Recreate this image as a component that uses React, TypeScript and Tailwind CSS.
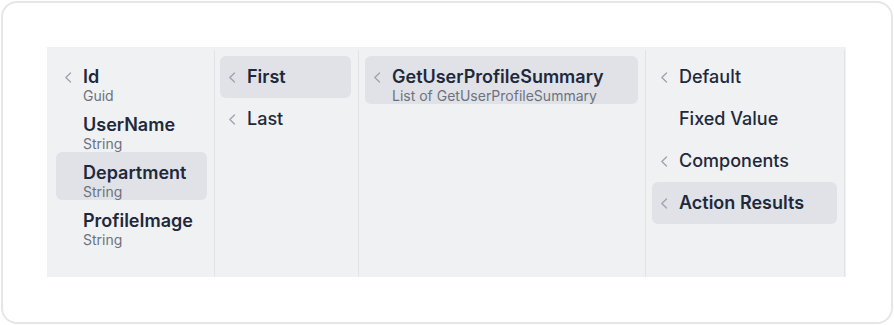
import React from 'react';

type Item = { label: string; sub?: string; chevron?: boolean; active?: boolean };

const fields: Item[] = [
  { label: 'Id', sub: 'Guid', chevron: true },
  { label: 'UserName', sub: 'String' },
  { label: 'Department', sub: 'String', active: true },
  { label: 'ProfileImage', sub: 'String' },
];

const positions: Item[] = [
  { label: 'First', chevron: true, active: true },
  { label: 'Last', chevron: true },
];

const results: Item[] = [
  { label: 'GetUserProfileSummary', sub: 'List of GetUserProfileSummary', chevron: true, active: true },
];

const sources: Item[] = [
  { label: 'Default', chevron: true },
  { label: 'Fixed Value' },
  { label: 'Components', chevron: true },
  { label: 'Action Results', chevron: true, active: true },
];

function Chevron() {
  return (
    <svg width="8" height="11" viewBox="0 0 8 11" fill="none" className="text-[#9ca3af]">
      <path d="M6.5 1 1.8 5.5 6.5 10" stroke="currentColor" strokeWidth="1.3" strokeLinecap="round" strokeLinejoin="round" />
    </svg>
  );
}

function Row({ item, boldAll }: { item: Item; boldAll?: boolean }) {
  const weight = item.active || boldAll ? 'font-semibold' : 'font-medium';
  return (
    <div
      className={`flex rounded-md pl-[8px] pr-2 ${item.sub ? 'h-[48px] pt-[10px]' : 'h-[42px] items-center'} ${
        item.active ? 'bg-[#e1e2e7]' : ''
      }`}
    >
      <div className={`w-[19px] shrink-0 flex ${item.sub ? 'pt-[6px]' : 'items-center'}`}>
        {item.chevron && <Chevron />}
      </div>
      <div className="flex flex-col min-w-0">
        <span className={`text-[18px] leading-[22px] text-[#1e293b] whitespace-nowrap ${weight}`}>{item.label}</span>
        {item.sub && (
          <span className="text-[14px] leading-[15px] text-[#6b7280] whitespace-nowrap">{item.sub}</span>
        )}
      </div>
    </div>
  );
}

export default function App() {
  return (
    <div className="w-[894px] h-[325px] bg-white p-[1px]" style={{ fontFamily: 'Inter, "Noto Sans", sans-serif' }}>
      <div className="w-full h-full rounded-2xl border-2 border-[#e4e6ea] bg-white pt-[44px] pl-[44px]">
        <div className="flex w-[799px] h-[230px] bg-[#f0f1f3] pt-[3px]">
          {/* fields */}
          <div className="w-[168px] border-r border-[#e1e3e6] pl-[9px] pr-[7px] pt-[6px]">
            {fields.map((f) => (
              <Row key={f.label} item={f} boldAll />
            ))}
          </div>
          {/* position */}
          <div className="w-[144px] border-r border-[#e1e3e6] pl-[5px] pr-[7px] pt-[6px]">
            {positions.map((f) => (
              <Row key={f.label} item={f} />
            ))}
          </div>
          {/* result */}
          <div className="w-[287px] border-r border-[#e1e3e6] pl-[6px] pr-[7px] pt-[6px]">
            {results.map((f) => (
              <Row key={f.label} item={f} />
            ))}
          </div>
          {/* source */}
          <div className="w-[199px] border-r border-[#e1e3e6] pl-[6px] pr-[7px] pt-[6px]">
            {sources.map((f) => (
              <Row key={f.label} item={f} />
            ))}
          </div>
        </div>
      </div>
    </div>
  );
}
